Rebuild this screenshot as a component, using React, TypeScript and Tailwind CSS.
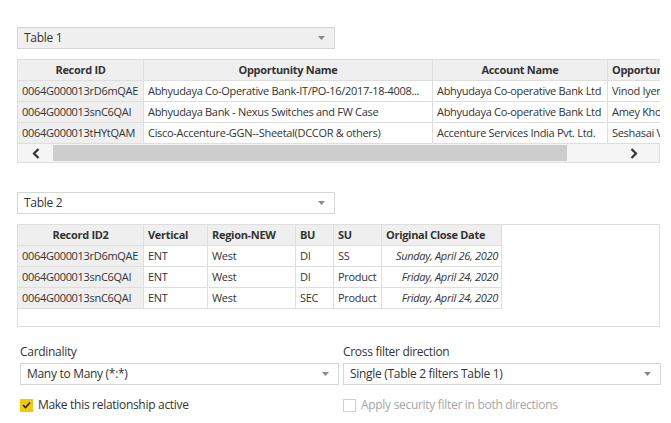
import React from 'react';

const font = { fontFamily: '"Open Sans", "Noto Sans", sans-serif' };

function Caret() {
  return (
    <svg width="7" height="4" viewBox="0 0 7 4" className="shrink-0">
      <path d="M0 0h7L3.5 4z" fill="#8a8a8a" />
    </svg>
  );
}

function Select({ label, grey, className }: { label: string; grey?: boolean; className?: string }) {
  return (
    <div
      className={`flex h-[22px] items-center justify-between border border-[#d6d6d6] pl-[6px] pr-[9px] ${grey ? 'bg-[#f0f0f0]' : 'bg-white'} ${className ?? ''}`}
    >
      <span className="text-[12px] tracking-[-0.3px] text-[#333]">{label}</span>
      <Caret />
    </div>
  );
}

const t1Rows = [
  ['0064G000013rD6mQAE', 'Abhyudaya Co-Operative Bank-IT/PO-16/2017-18-4008...', 'Abhyudaya Co-operative Bank Ltd', 'Vinod Iyer'],
  ['0064G000013snC6QAI', 'Abhyudaya Bank - Nexus Switches and FW Case', 'Abhyudaya Co-operative Bank Ltd', 'Amey Khot'],
  ['0064G000013tHYtQAM', 'Cisco-Accenture-GGN--Sheetal(DCCOR & others)', 'Accenture Services India Pvt. Ltd.', 'Seshasai V'],
];

const t2Rows = [
  ['0064G000013rD6mQAE', 'ENT', 'West', 'DI', 'SS', 'Sunday, April 26, 2020'],
  ['0064G000013snC6QAI', 'ENT', 'West', 'DI', 'Product', 'Friday, April 24, 2020'],
  ['0064G000013snC6QAI', 'ENT', 'West', 'SEC', 'Product', 'Friday, April 24, 2020'],
];

const th = 'h-[21px] border-r border-b border-[#dedede] bg-[#efefef] px-[4px] py-0 text-[11px] font-bold tracking-[-0.3px] text-[#333] whitespace-nowrap overflow-hidden';
const td = 'h-[21px] border-r border-b border-[#dedede] pl-[4px] pr-[3px] py-0 text-[11px] tracking-[-0.3px] text-[#333] whitespace-nowrap overflow-hidden text-ellipsis';

function Table1() {
  return (
    <div className="mt-[10px] w-[643px] overflow-hidden border-l border-t border-[#dedede]">
      <table className="table-fixed border-separate border-spacing-0" style={{ width: 762 }}>
        <colgroup>
          <col className="w-[126px]" />
          <col className="w-[289px]" />
          <col className="w-[175px]" />
          <col className="w-[172px]" />
        </colgroup>
        <thead>
          <tr>
            <th className={`${th} text-center`}>Record ID</th>
            <th className={`${th} text-center`}>Opportunity Name</th>
            <th className={`${th} text-center`}>Account Name</th>
            <th className={`${th} text-left`}>Opportunity Owner</th>
          </tr>
        </thead>
        <tbody>
          {t1Rows.map((r, i) => (
            <tr key={i}>
              <td className={`${td} bg-[#efefef]`}>{r[0]}</td>
              <td className={td}>{r[1]}</td>
              <td className={td}>{r[2]}</td>
              <td className={td}>{r[3]}</td>
            </tr>
          ))}
        </tbody>
      </table>
      <div className="flex h-[19px] items-center border-r border-b border-[#dedede] bg-[#f5f5f5]">
        <div className="flex w-[35px] justify-center">
          <svg width="8" height="11" viewBox="0 0 8 11"><path d="M6.5 1L2 5.5l4.5 4.5" fill="none" stroke="#333" strokeWidth="2.2" /></svg>
        </div>
        <div className="h-[16px] w-[514px] bg-[#cdcdcd]" />
        <div className="flex-1" />
        <div className="flex w-[50px] justify-center">
          <svg width="8" height="11" viewBox="0 0 8 11"><path d="M1.5 1L6 5.5 1.5 10" fill="none" stroke="#333" strokeWidth="2.2" /></svg>
        </div>
      </div>
    </div>
  );
}

function Table2() {
  return (
    <div className="mt-[10px] h-[103px] w-[643px] border border-[#dedede]">
      <table className="table-fixed border-separate border-spacing-0" style={{ width: 484 }}>
        <colgroup>
          <col className="w-[126px]" />
          <col className="w-[64px]" />
          <col className="w-[88px]" />
          <col className="w-[38px]" />
          <col className="w-[48px]" />
          <col className="w-[120px]" />
        </colgroup>
        <thead>
          <tr>
            <th className={`${th} text-center`}>Record ID2</th>
            <th className={`${th} text-left`}>Vertical</th>
            <th className={`${th} text-left`}>Region-NEW</th>
            <th className={`${th} text-left`}>BU</th>
            <th className={`${th} text-left`}>SU</th>
            <th className={`${th} text-left`}>Original Close Date</th>
          </tr>
        </thead>
        <tbody>
          {t2Rows.map((r, i) => (
            <tr key={i}>
              <td className={`${td} bg-[#efefef]`}>{r[0]}</td>
              <td className={td}>{r[1]}</td>
              <td className={td}>{r[2]}</td>
              <td className={td}>{r[3]}</td>
              <td className={td}>{r[4]}</td>
              <td className={`${td} text-right italic`}>{r[5]}</td>
            </tr>
          ))}
        </tbody>
      </table>
    </div>
  );
}

export default function App() {
  return (
    <div className="h-[423px] w-[671px] overflow-hidden bg-white pl-[17px] pt-[27px]" style={font}>
      <Select label="Table 1" grey className="w-[318px]" />
      <Table1 />
      <Select label="Table 2" className="mt-[29px] w-[318px]" />
      <Table2 />
      <div className="mt-[16px] grid grid-cols-[319px_318px] gap-[4px] pl-[3px]">
        <div>
          <div className="h-[18px] text-[12px] leading-[18px] tracking-[-0.3px] text-[#333]">Cardinality</div>
          <Select label="Many to Many (*:*)" className="mt-[2px]" />
          <label className="mt-[11px] flex items-center gap-[5px]">
            <span className="flex h-[13px] w-[13px] items-center justify-center bg-[#f2c811]">
              <svg width="9" height="8" viewBox="0 0 9 8"><path d="M1 4l2.5 2.5L8 1.5" fill="none" stroke="#252423" strokeWidth="1.6" /></svg>
            </span>
            <span className="text-[12px] tracking-[-0.3px] text-[#333]">Make this relationship active</span>
          </label>
        </div>
        <div>
          <div className="h-[18px] text-[12px] leading-[18px] tracking-[-0.3px] text-[#333]">Cross filter direction</div>
          <Select label="Single (Table 2 filters Table 1)" className="mt-[2px]" />
          <label className="mt-[11px] flex items-center gap-[5px]">
            <span className="h-[13px] w-[13px] border border-[#d0d0d0] bg-white" />
            <span className="text-[12px] tracking-[-0.3px] text-[#a6a6a6]">Apply security filter in both directions</span>
          </label>
        </div>
      </div>
    </div>
  );
}
